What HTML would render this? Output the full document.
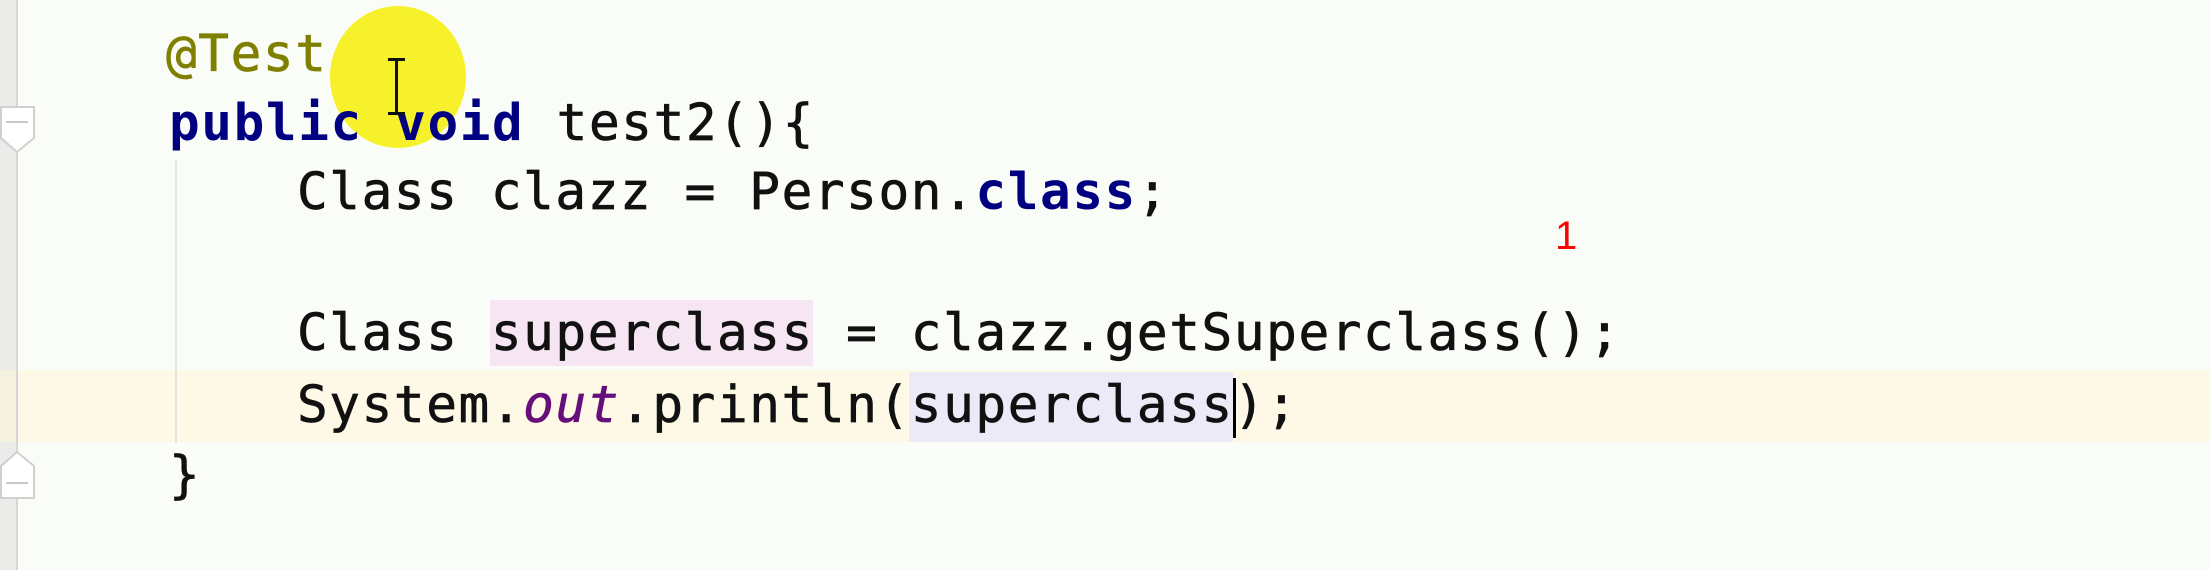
<!DOCTYPE html>
<html><head><style>
html,body{margin:0;padding:0;}
body{width:2210px;height:570px;background:#f9fcf7;position:relative;overflow:hidden;font-family:"DejaVu Sans Mono","Liberation Mono",monospace;}
.abs{position:absolute;}
.line{position:absolute;left:0;font-size:51px;white-space:pre;line-height:70px;color:#111;letter-spacing:1.6px;-webkit-text-stroke:0.7px currentColor;}
.kw{color:#000080;font-weight:bold;-webkit-text-stroke:0;}
.ann{color:#808000;}
.st{color:#660e7a;font-style:italic;}
</style></head><body>
<div class="abs" style="left:0;top:0;width:16px;height:570px;background:#ebebe9;"></div>
<div class="abs" style="left:16px;top:0;width:2px;height:570px;background:#d6d6d4;"></div>
<div class="abs" style="left:18px;top:370px;width:2192px;height:72px;background:#fdf9e6;"></div>
<div class="abs" style="left:0;top:370px;width:16px;height:72px;background:#f5f1df;"></div>
<svg class="abs" style="left:0;top:100px" width="40" height="60"><path d="M1 7 L34 7 L34 38 L17 52 L1 38 Z" fill="#fff" stroke="#d0d0d0" stroke-width="2"/><line x1="6" y1="22" x2="28" y2="22" stroke="#c8c8c8" stroke-width="2"/></svg>
<svg class="abs" style="left:0;top:448px" width="40" height="60"><path d="M1 50 L34 50 L34 18 L17 4 L1 18 Z" fill="#fff" stroke="#d0d0d0" stroke-width="2"/><line x1="6" y1="35" x2="28" y2="35" stroke="#c8c8c8" stroke-width="2"/></svg>
<div class="abs" style="left:175px;top:160px;width:2px;height:283px;background:#e2e4e0;"></div>
<div class="abs" style="left:490px;top:300px;width:323px;height:66px;background:#f6e6f4;"></div>
<div class="abs" style="left:909px;top:372px;width:324px;height:70px;background:#eceaf6;"></div>
<div class="abs" style="left:330px;top:6px;width:136px;height:142px;border-radius:50%;background:#f7f020;opacity:0.95;"></div>
<div class="line" style="top:20px;left:166px"><span class="ann">@Test</span></div>
<div class="line" style="top:89px;left:169px"><span class="kw">public</span> <span class="kw">void</span> test2(){</div>
<div class="line" style="top:158px;left:297px">Class clazz = Person.<span class="kw">class</span>;</div>
<div class="line" style="top:299px;left:297px">Class superclass = clazz.getSuperclass();</div>
<div class="line" style="top:371px;left:297px">System.<span class="st">out</span>.println(superclass);</div>
<div class="line" style="top:441px;left:169px">}</div>
<div class="abs" style="left:1233px;top:378px;width:3px;height:60px;background:#000;"></div>
<div class="abs" style="left:395px;top:60px;width:3px;height:54px;background:#111;"></div>
<div class="abs" style="left:388px;top:58px;width:17px;height:3px;background:#111;"></div>
<div class="abs" style="left:388px;top:112px;width:17px;height:3px;background:#111;"></div>
<div class="abs" style="left:1555px;top:214px;font-family:'Liberation Sans',sans-serif;font-size:40px;color:#f00;">1</div>
</body></html>
